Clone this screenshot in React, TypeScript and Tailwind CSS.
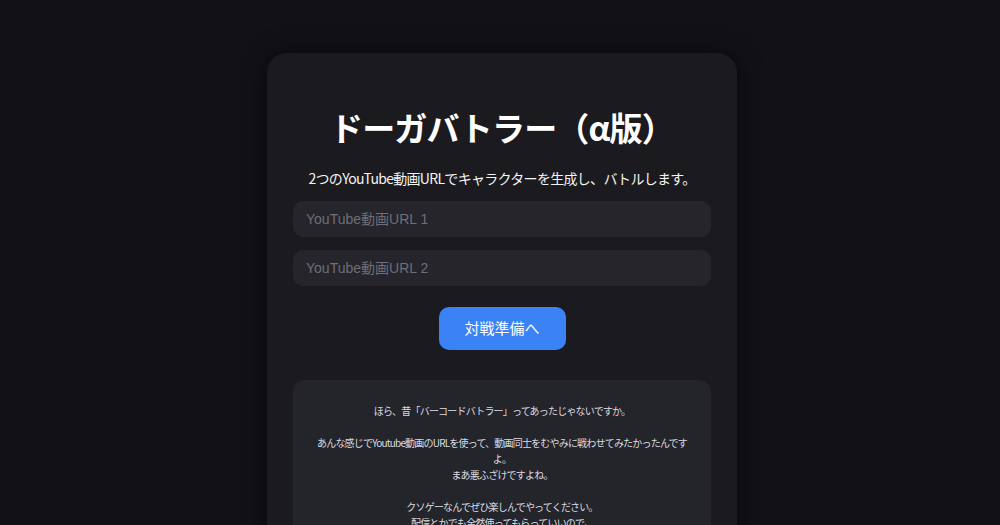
import { useState } from "react";

// 説明文（改行はそのまま表示）
const introLines = [
    "ほら、昔「バーコードバトラー」ってあったじゃないですか。",
    "",
    "あんな感じでYoutube動画のURLを使って、動画同士をむやみに戦わせてみたかったんですよ。",
    "まあ悪ふざけですよね。",
    "",
    "クソゲーなんでぜひ楽しんでやってください。",
    "配信とかでも全然使ってもらっていいので。",
    "",
    "感想とかあればぜひ教えてください。",
];

export default function App() {
    const [url1, setUrl1] = useState("");
    const [url2, setUrl2] = useState("");

    return (
        <div className="min-h-screen w-full bg-[#121117] font-['Noto_Sans_CJK_JP',sans-serif] text-white">
            <div className="flex justify-center pt-[53px] pb-10 pl-1">
                <div className="w-[470px] rounded-[20px] bg-[#1b1b1f] px-[26px] pt-[50px] pb-8 shadow-[0_0_24px_rgba(0,0,0,0.55)]">
                    {/* タイトル */}
                    <h1 className="text-center text-[33px] leading-[48px] font-bold tracking-[-0.8px] text-white">
                        ドーガバトラー（α版）
                    </h1>
                    <p className="mt-[17px] text-center text-[14px] leading-5 tracking-[-0.7px] text-[#f4f4f5]">
                        2つのYouTube動画URLでキャラクターを生成し、バトルします。
                    </p>

                    {/* URL入力 */}
                    <div className="mt-[13px] flex flex-col gap-[13px]">
                        <input
                            value={url1}
                            onChange={(e) => setUrl1(e.target.value)}
                            placeholder="YouTube動画URL 1"
                            className="h-9 w-full rounded-[10px] bg-[#25252b] pl-[13px] font-['Liberation_Sans','Noto_Sans_CJK_JP',sans-serif] text-[14px] text-white outline-none placeholder:text-[#6e6e78]"
                        />
                        <input
                            value={url2}
                            onChange={(e) => setUrl2(e.target.value)}
                            placeholder="YouTube動画URL 2"
                            className="h-9 w-full rounded-[10px] bg-[#25252b] pl-[13px] font-['Liberation_Sans','Noto_Sans_CJK_JP',sans-serif] text-[14px] text-white outline-none placeholder:text-[#6e6e78]"
                        />
                    </div>

                    <div className="mt-[21px] flex justify-center">
                        <button className="h-[43px] w-[127px] rounded-[10px] bg-[#3b82f6] text-[15px] text-white hover:bg-[#2f74e8]">
                            対戦準備へ
                        </button>
                    </div>

                    {/* 説明 */}
                    <div className="mt-[30px] rounded-xl bg-[#24242b] px-5 pt-[23px] pb-6 text-center text-[10px] leading-4 tracking-[-0.8px] text-[#dcdce0]">
                        {introLines.map((line, i) =>
                            line === "" ? (
                                <div key={i} className="h-4" />
                            ) : (
                                <p key={i}>{line}</p>
                            )
                        )}
                    </div>
                </div>
            </div>
        </div>
    );
}
